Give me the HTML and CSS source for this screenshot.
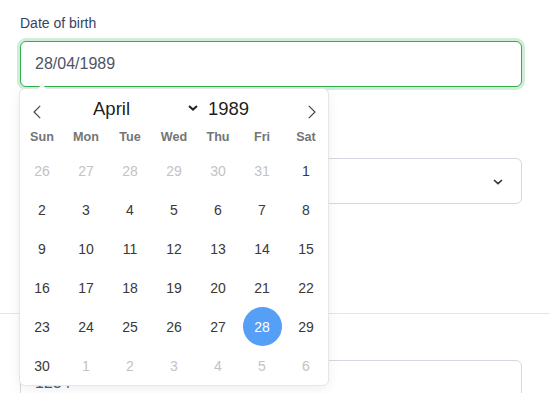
FILE: index.html
```html
<!DOCTYPE html>
<html lang="en">
<head>
<meta charset="utf-8">
<title>Date of birth</title>
<link rel="stylesheet" href="styles.css">
</head>
<body>
<div class="page">
  <section class="section section-top">
    <div class="field date-field">
      <label class="label">Date of birth</label>
      <div class="input input-focus">28/04/1989</div>

      <div class="calendar">
        <div class="cal-header">
          <span class="nav nav-prev">
            <svg width="8" height="14" viewBox="0 0 8 14"><polyline points="7.2,0.8 1,7 7.2,13.2" fill="none" stroke="#3c3c3c" stroke-width="1.1"/></svg>
          </span>
          <span class="month-select">
            <span class="month-name">April</span>
            <svg class="month-caret" width="10" height="6" viewBox="0 0 10 6"><polyline points="1,1 5,4.6 9,1" fill="none" stroke="#222" stroke-width="2"/></svg>
          </span>
          <span class="year">1989</span>
          <span class="nav nav-next">
            <svg width="8" height="14" viewBox="0 0 8 14"><polyline points="0.8,0.8 7,7 0.8,13.2" fill="none" stroke="#3c3c3c" stroke-width="1.1"/></svg>
          </span>
        </div>
        <div class="weekdays">
          <span>Sun</span><span>Mon</span><span>Tue</span><span>Wed</span><span>Thu</span><span>Fri</span><span>Sat</span>
        </div>
        <div class="days">
          <span class="day muted">26</span><span class="day muted">27</span><span class="day muted">28</span><span class="day muted">29</span><span class="day muted">30</span><span class="day muted">31</span><span class="day">1</span>
          <span class="day">2</span><span class="day">3</span><span class="day">4</span><span class="day">5</span><span class="day">6</span><span class="day">7</span><span class="day">8</span>
          <span class="day">9</span><span class="day">10</span><span class="day">11</span><span class="day">12</span><span class="day">13</span><span class="day">14</span><span class="day">15</span>
          <span class="day">16</span><span class="day">17</span><span class="day">18</span><span class="day">19</span><span class="day">20</span><span class="day">21</span><span class="day">22</span>
          <span class="day">23</span><span class="day">24</span><span class="day">25</span><span class="day">26</span><span class="day">27</span><span class="day selected"><span class="dot">28</span></span><span class="day">29</span>
          <span class="day">30</span><span class="day muted">1</span><span class="day muted">2</span><span class="day muted">3</span><span class="day muted">4</span><span class="day muted">5</span><span class="day muted">6</span>
        </div>
      </div>
    </div>

    <div class="field field-select">
      <div class="select">
        <span class="select-value"></span>
        <svg width="10" height="6" viewBox="0 0 10 6"><polyline points="1,1 5,4.6 9,1" fill="none" stroke="#333" stroke-width="1.6"/></svg>
      </div>
    </div>
  </section>

  <section class="section section-bottom">
    <div class="field">
      <div class="input">1234</div>
    </div>
  </section>
</div>
</body>
</html>
```

FILE: styles.css
```css
* { box-sizing: border-box; }

html, body {
  margin: 0;
  padding: 0;
  background: #ffffff;
  font-family: "Liberation Sans", Arial, sans-serif;
  overflow: hidden;
}

.page {
  width: 550px;
  height: 393px;
  overflow: hidden;
}

.section {
  padding: 0 28px 0 20px;
}

.section-top {
  padding-top: 13px;
  padding-bottom: 109px;
}

.section-bottom {
  border-top: 1px solid #e2e5eb;
  padding-top: 46px;
}

.field {
  display: flex;
  flex-direction: column;
}

.date-field {
  position: relative;
  z-index: 2;
}

.field-select {
  margin-top: 71px;
}

.label {
  font-size: 14px;
  line-height: 20px;
  color: #36435f;
  margin-bottom: 8px;
}

.input {
  height: 46px;
  border: 1px solid #d3d7e1;
  border-radius: 6px;
  padding: 10px 14px;
  font-size: 16px;
  line-height: 24px;
  color: #4c5874;
  background: #fff;
}

.input-focus {
  border-color: #2fae4e;
  box-shadow: 0 0 0 3px rgba(47, 174, 78, 0.22);
  color: #4d5565;
}

.select {
  height: 46px;
  border: 1px solid #d5d8e2;
  border-radius: 6px;
  padding: 0 18px 0 14px;
  display: flex;
  align-items: center;
  justify-content: space-between;
  background: #fff;
}

.select svg { margin-top: 2px; }

/* Calendar popup */
.calendar {
  position: absolute;
  top: calc(100% + 2px);
  left: 0;
  width: 308px;
  background: #fff;
  border-radius: 5px;
  box-shadow: 1px 0 0 #e6e6e6, -1px 0 0 #e6e6e6, 0 1px 0 #e6e6e6, 0 -1px 0 #e6e6e6, 0 3px 13px rgba(0, 0, 0, 0.08);
}

.calendar::before,
.calendar::after {
  content: "";
  position: absolute;
  left: 22px;
  height: 0;
  width: 0;
  border: solid transparent;
  bottom: 100%;
}

.calendar::before {
  border-width: 5px;
  margin-left: -5px;
  border-bottom-color: #e6e6e6;
}

.calendar::after {
  border-width: 4px;
  margin-left: -4px;
  border-bottom-color: #fff;
}

.cal-header {
  height: 34px;
  display: flex;
  align-items: flex-start;
}

.nav {
  display: flex;
  padding-top: 16px;
}

.nav-prev { padding-left: 13px; }

.nav-next {
  margin-left: auto;
  padding-right: 12px;
}

.month-select {
  display: flex;
  align-items: flex-start;
  justify-content: space-between;
  width: 105px;
  margin-left: 52px;
  padding-top: 9px;
}

.month-name,
.year {
  font-size: 18.5px;
  line-height: 22px;
  color: rgba(0, 0, 0, 0.9);
}

.month-caret { margin-top: 7px; }

.year {
  margin-left: 10px;
  padding-top: 9px;
}

.weekdays {
  height: 28px;
  display: grid;
  grid-template-columns: repeat(7, 44px);
  align-items: center;
  justify-items: center;
  font-size: 12.6px;
  font-weight: bold;
  color: #757575;
}

.days {
  display: grid;
  grid-template-columns: repeat(7, 44px);
  grid-auto-rows: 39px;
}

.day {
  display: flex;
  align-items: center;
  justify-content: center;
  font-size: 14px;
  color: #393939;
}

.day.muted { color: #c3c3c3; }

.dot {
  width: 39px;
  height: 39px;
  border-radius: 50%;
  background: #569ff7;
  color: #fff;
  display: flex;
  align-items: center;
  justify-content: center;
}
```
